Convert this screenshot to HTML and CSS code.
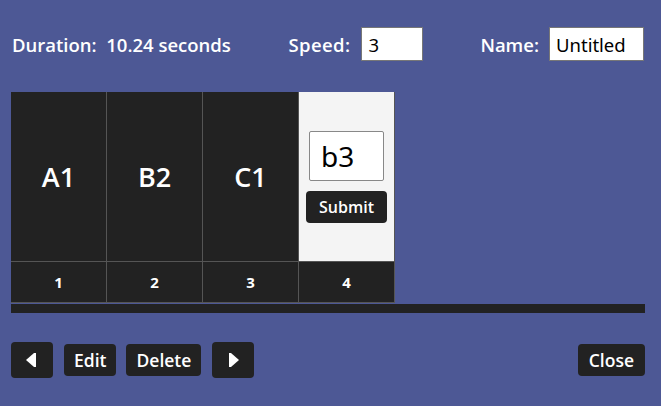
FILE: index.html
```html
<!DOCTYPE html>
<html>
<head>
<meta charset="utf-8">
<link rel="stylesheet" href="styles.css">
</head>
<body>
<div class="toolbar">
  <div class="duration">Duration:&nbsp; 10.24 seconds</div>
  <label class="field speed">Speed: <input class="inp inp-speed" type="text" value="3"></label>
  <label class="field name">Name: <input class="inp inp-name" type="text" value="Untitled"></label>
</div>

<div class="track">
  <div class="col"><div class="frame">A1</div><div class="num">1</div></div>
  <div class="col"><div class="frame">B2</div><div class="num">2</div></div>
  <div class="col"><div class="frame">C1</div><div class="num">3</div></div>
  <div class="col"><div class="frame edit">
    <input class="inp-frame" type="text" value="b3">
    <button class="btn submit">Submit</button>
  </div><div class="num">4</div></div>
</div>
<div class="bar"></div>

<div class="controls">
  <button class="btn arrow" aria-label="Previous"><svg width="12" height="14" viewBox="0 0 12 14"><polygon points="0,7 8,0 10,0 10,14 8,14" fill="#fff"/></svg></button>
  <button class="btn text">Edit</button>
  <button class="btn text">Delete</button>
  <button class="btn arrow next" aria-label="Next"><svg width="12" height="14" viewBox="0 0 12 14"><polygon points="12,7 4,0 2,0 2,14 4,14" fill="#fff"/></svg></button>
  <div class="spacer"></div>
  <button class="btn text close">Close</button>
</div>
</body>
</html>
```
FILE: styles.css
```css
html, body {
  margin: 0;
  padding: 0;
}
body {
  background: #4d5895;
  font-family: "Open Sans", "Noto Sans", sans-serif;
  color: #fff;
  width: 661px;
  height: 406px;
  overflow: hidden;
}
.toolbar {
  display: flex;
  align-items: center;
  height: 34px;
  margin: 27px 17px 0 12px;
  font-size: 18.5px;
  font-weight: 600;
}
.duration {
  flex: 1;
}
.field {
  display: flex;
  align-items: center;
  gap: 11px;
}
.speed {
  letter-spacing: 0.4px;
}
.name {
  margin-left: 57px;
  gap: 10px;
}
.inp {
  box-sizing: border-box;
  height: 34px;
  border: 1px solid #777;
  background: #fff;
  color: #000;
  font-family: "Noto Sans", "Open Sans", sans-serif;
  font-size: 18.5px;
  letter-spacing: 0;
  padding: 0 6px;
  outline: none;
}
.inp-speed { width: 62px; }
.inp-name { width: 95px; }

.track {
  display: flex;
  margin: 31px 0 0 11px;
}
.col {
  box-sizing: border-box;
  width: 96px;
  border-right: 1px solid #555;
  background: #222;
}
.frame {
  box-sizing: border-box;
  height: 170px;
  border-bottom: 1px solid #555;
  display: flex;
  align-items: center;
  justify-content: center;
  font-size: 27px;
  font-weight: 600;
  padding-bottom: 1px;
}
.frame.edit {
  background: #f4f4f4;
  flex-direction: column;
  padding-bottom: 0;
}
.inp-frame {
  box-sizing: border-box;
  width: 75px;
  height: 50px;
  border: 1px solid #888;
  border-radius: 2px;
  background: #fff;
  color: #000;
  font-family: "Noto Sans", "Open Sans", sans-serif;
  font-size: 28px;
  padding: 0 11px;
  outline: none;
}
.num {
  box-sizing: border-box;
  height: 41px;
  border-bottom: 1px solid #555;
  display: flex;
  align-items: center;
  justify-content: center;
  font-size: 15px;
  font-weight: 700;
}
.bar {
  margin: 1px 0 0 11px;
  width: 634px;
  height: 9px;
  background: #222;
}
.btn {
  background: #222;
  color: #fff;
  border: none;
  border-radius: 4px;
  font-family: "Open Sans", "Noto Sans", sans-serif;
  font-weight: 600;
  padding: 0;
  cursor: pointer;
}
.submit {
  margin-top: 10px;
  width: 81px;
  height: 32px;
  font-size: 16px;
}
.controls {
  display: flex;
  align-items: center;
  margin: 29px 16px 0 11px;
  height: 36px;
}
.arrow {
  width: 42px;
  height: 36px;
  display: flex;
  align-items: center;
  justify-content: center;
}
.arrow.next {
  margin-left: 11px;
}
.text {
  height: 32px;
  padding: 0 10px;
  font-size: 17.5px;
  margin-left: 11px;
}
.text + .text {
  margin-left: 10px;
}
.close {
  padding: 0 11px;
}
.spacer { flex: 1; }
```
